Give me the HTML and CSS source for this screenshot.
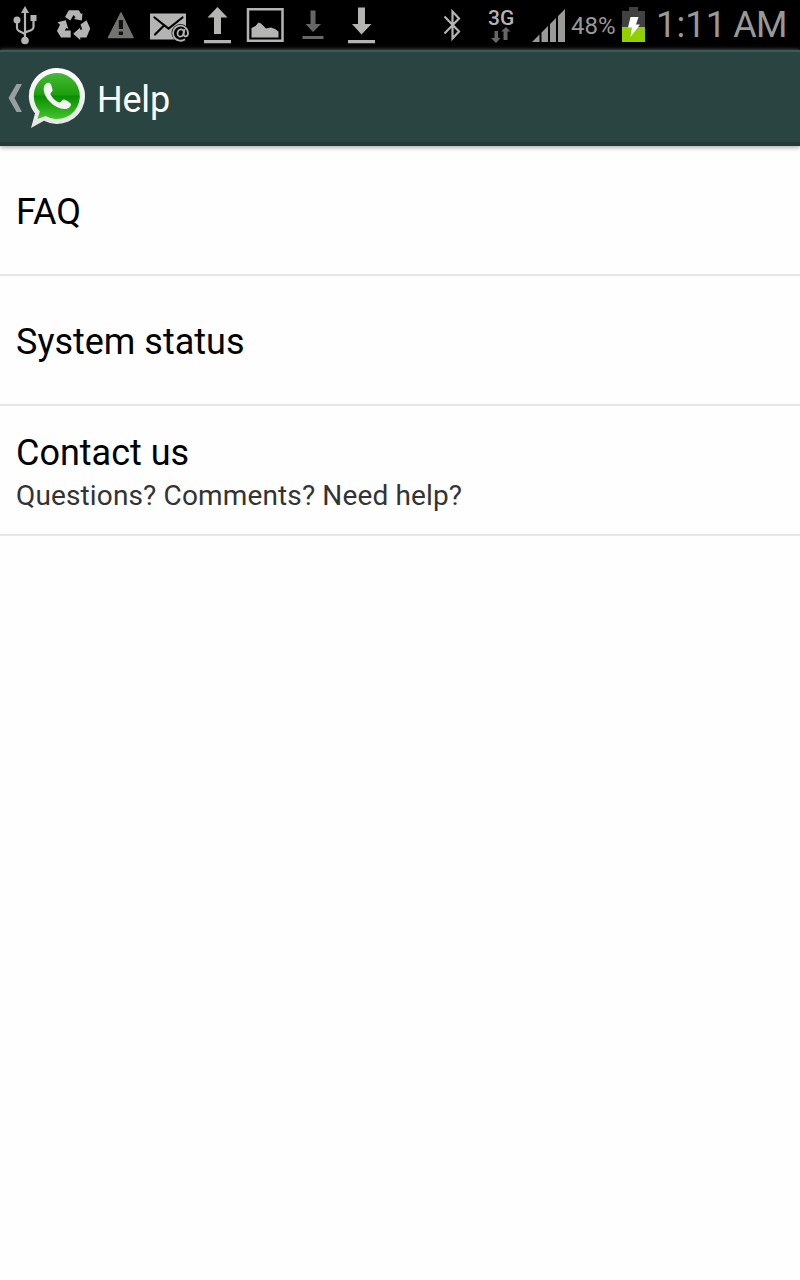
FILE: index.html
```html
<!DOCTYPE html>
<html lang="en">
<head>
<meta charset="utf-8">
<title>Help</title>
<link rel="stylesheet" href="styles.css">
</head>
<body>
<div class="status">
  <svg width="48" height="50" viewBox="0 0 48 50" fill="#b4b4b2" stroke="#b4b4b2">
    <path d="M25 6l4 7h-8z" stroke="none"/><path d="M25 11v28M17 20v8q0 2 2 3l6 3M33.500 18v9q0 2-2 3l-6.500 2.500" fill="none" stroke-width="2.200"/>
    <circle cx="17" cy="20" r="3.500" stroke="none"/><circle cx="25" cy="40.500" r="3.800" stroke="none"/><path d="M30.500 15h6v6h-6z" stroke="none"/>
  </svg>
  <svg width="48" height="50" viewBox="48 0 48 50" fill="#b4b4b2">
    <path d="M68.800 10.300h10l2.400 3.700 1.300-.7-.7 7.200-8-1.500 1.800-1.400-2-2.600-3.300 5.500-5.300-3.500z"/>
    <path d="M57.500 22.300l8.200-2 2.600 8.700-2-1-1.600 2.600h6V37.500h-9.700l-4-6.500 3-6.300z"/>
    <path d="M80.500 24.500l6-4.200 3.700 8.200-3.700 9h-6.300v2.500l-7-6.300 7-6.200v2.600l2-.8z"/>
  </svg>
  <svg width="48" height="50" viewBox="96 0 48 50">
    <path d="M121 13L133 37.500H108.500z" fill="#737371" stroke="#737371" stroke-width="1.500" stroke-linejoin="round"/>
    <path d="M118.800 20h4.200v9h-4.200zM118.800 31.500h4.200v3.500h-4.200z" fill="#111"/>
  </svg>
  <svg width="50" height="50" viewBox="144 0 50 50">
    <path d="M150 13.500h36v26h-36z" fill="#b4b4b2"/><path d="M154.500 17.500l14 11 14-11M155 34.500l9-9" fill="none" stroke="#000" stroke-width="2.200" stroke-linecap="round"/>
    <circle cx="180.500" cy="33" r="9" fill="#000"/>
    <g fill="none" stroke="#b4b4b2" stroke-width="1.800"><path d="M185 39.200A7.500 7.500 0 1 1 188 33.200C188 37 184 37.500 183.500 34.500L184.500 29"/><ellipse cx="180.600" cy="33" rx="3" ry="3.700" transform="rotate(15 180.600 33)"/></g>
  </svg>
  <svg width="46" height="50" viewBox="194 0 46 50" fill="#b4b4b2"><path d="M217.500 7L227.500 17.500H221V34h-7V17.500h-6.500zM204 40h27v3.200h-27z"/></svg>
  <svg width="50" height="50" viewBox="240 0 50 50"><path d="M248 9.200h34.500v31.500H248z" fill="none" stroke="#b4b4b2" stroke-width="2.500"/><path d="M251.500 37.500V28l4-2 3-3.500 2.500 1 5 5 5-1 4 1.500 3.500 2.500v6z" fill="#b4b4b2"/></svg>
  <svg width="46" height="50" viewBox="290 0 46 50" fill="#676765"><path d="M310.500 10.500h5V24h5.500l-8 8-7.500-8h5zM302.500 36h21v3h-21z"/></svg>
  <svg width="100" height="50" viewBox="336 0 100 50" fill="#b4b4b2"><path d="M358 7.500h7V24h6.500L361.500 34.500 352 24h6zM348 40h27v3.200h-27z"/></svg>
  <svg width="44" height="50" viewBox="436 0 44 50" fill="none" stroke="#b4b4b2" stroke-width="2.200"><path d="M444.500 16.500L459 31.500 452.500 38.500V11.500L459 18.500 444.500 33.500"/></svg>
  <div class="network"><span class="gen">3G</span>
    <svg width="21" height="16" viewBox="490 27 21 16" fill="#676765"><path d="M494.500 31h3.500v7h2.500l-4.500 5-5-5h3.500zM503.500 40v-8.500H501l5-4.500 4.500 4.500h-3V40z"/></svg>
  </div>
  <svg width="34" height="50" viewBox="532 0 34 50" fill="#999997"><path d="M532 42l7.500-7.500V42zM541.500 32.500l6.500-6.500v16h-6.500zM550 24l6-6v24h-6zM558 16l7-7v33h-7z"/></svg>
  <span class="percent">48%</span>
  <svg width="25" height="50" viewBox="621 0 25 50"><path d="M622 11h7V7h9v4h7v16h-23z" fill="#414141"/><path d="M622 27h23v15h-23z" fill="#92d000"/><path d="M630.500 17h8l-2.500 7.500h4L630.500 37l1.500-9.500h-4z" fill="#fff"/></svg>
  <span class="clock">1:11 <span class="meridiem">AM</span></span>
</div>
<header class="bar">
  <svg width="92" height="94" viewBox="0 50 92 94">
    <defs><linearGradient id="green" x1="0" y1="0" x2="0" y2="1"><stop offset="0" stop-color="#46ba34"/><stop offset=".48" stop-color="#1d9e0c"/><stop offset=".5" stop-color="#078e00"/><stop offset="1" stop-color="#43c52b"/></linearGradient>
    <linearGradient id="rim" x1="0" y1="0" x2="0" y2="1"><stop offset="0" stop-color="#fff"/><stop offset="1" stop-color="#e4e4e4"/></linearGradient></defs>
    <path d="M16.500 84h5.500l-7.500 14 7.500 14h-5.500L8.500 98z" fill="#95a09f"/>
    <path d="M57 68a28 28 0 1 1-13 52.800L31 128l4-14.500A28 28 0 0 1 57 68z" fill="url(#rim)"/>
    <path d="M57 73a23 23 0 1 1-11.500 43L37.500 119l2.300-7.500A23 23 0 0 1 57 73z" fill="url(#green)"/>
    <path d="M44.500 85.500c1-2 3.500-3.500 5.500-2.300 1.500 1 1.800 4 2.500 6.500.5 2-2.500 3-2 4.500 1.500 3.500 5 7 9 8.300 1.500.4 3-3.500 4.500-3 2.500.8 5.500 2.500 6.800 4.200.8 1.800-1.300 4-3.300 4.800-3 1.200-7 .2-10.500-1.500-6-3-10.500-8-12.500-13.500-1-3-1.200-6 0-8z" fill="#f4f4f4"/>
  </svg>
  <h1 class="title">Help</h1>
</header>
<main class="list">
  <section class="item"><h2 class="label">FAQ</h2></section>
  <section class="item"><h2 class="label">System status</h2></section>
  <section class="item"><h2 class="label">Contact us</h2><p class="detail">Questions? Comments? Need help?</p></section>
</main>
</body>
</html>
```
FILE: styles.css
```css
* { box-sizing: border-box; }
body { margin: 0; background: #fefefe; font-family: Roboto, sans-serif; color: #000; }
svg { display: block; flex: none; }
.status { display: flex; height: 50px; background: #000; color: #999997; white-space: nowrap; overflow: hidden; }
.network { width: 52px; padding: 9px 0 0 8px; }
.gen { display: block; font-size: 21px; line-height: 19px; font-weight: 500; color: #b4b4b2; }
.network svg { margin: -1px 0 0 2px; }
.percent { width: 55px; padding: 12px 0 0 5px; font-size: 24px; line-height: 29px; }
.clock { padding: 4px 0 0 10px; font-size: 36px; line-height: 42px; font-weight: 400; word-spacing: -2px; letter-spacing: .2px; }
.meridiem { letter-spacing: -.8px; }
.bar { display: flex; height: 96px; background: #2a4441; border-top: 2px solid #3f5956; border-bottom: 4px solid #263b38; box-shadow: 0 1px 5px #999; }
.bar svg { margin-top: -2px; }
.title { margin: 27px 0 0 5px; font-size: 36px; line-height: 42px; font-weight: 400; color: #fff; letter-spacing: -.2px; }
.item { display: flex; flex-direction: column; justify-content: center; height: 130px; padding: 4px 16px 0; border-bottom: 2px solid #e6e6e6; }
.label { margin: 0; font-size: 36px; line-height: 44px; font-weight: 400; }
.detail { margin: 1px 0 -3px; font-size: 28px; line-height: 40px; color: #333; letter-spacing: .14px; }
```
